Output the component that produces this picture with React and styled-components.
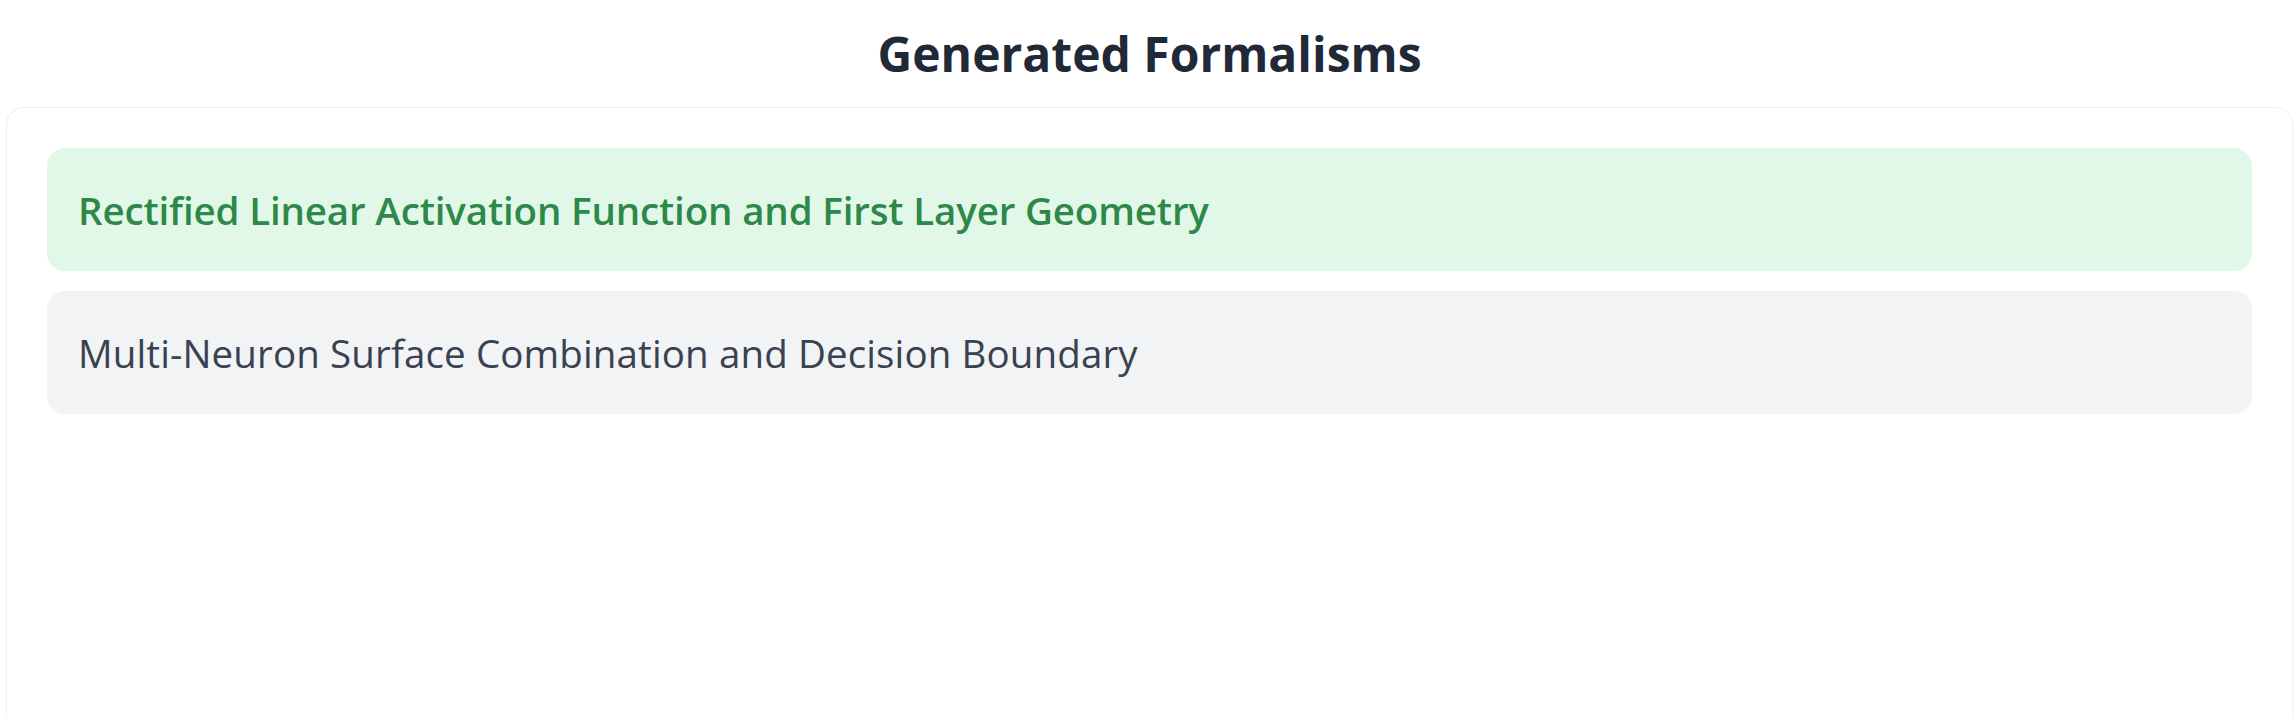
import React from 'react';
import styled, { createGlobalStyle } from 'styled-components';

const GlobalStyle = createGlobalStyle`
  html, body {
    margin: 0;
    padding: 0;
    background: #ffffff;
  }
  body {
    font-family: "Open Sans", "Noto Sans", "Liberation Sans", sans-serif;
  }
`;

// whole page: heading on top, the panel below it runs off the bottom edge
const Page = styled.div`
  width: 100%;
  height: 718px;
  overflow: hidden;
  padding: 0 3px 0 6px;
  box-sizing: border-box;
`;

const Heading = styled.h2`
  margin: 0;
  padding-top: 23px;
  height: 107px;
  box-sizing: border-box;
  text-align: center;
  font-size: 48px;
  line-height: 62px;
  font-weight: 700;
  color: #1f2937;
`;

const Panel = styled.div`
  background: #ffffff;
  border: 1.5px solid #f0f0f1;
  border-radius: 18px;
  box-shadow: 0 1px 3px rgba(0, 0, 0, 0.04);
  padding: 40px 40px 60px 40px;
  height: 700px;
  box-sizing: border-box;
  display: flex;
  flex-direction: column;
  gap: 20px;
`;

const Item = styled.div`
  display: flex;
  align-items: center;
  height: 123px;
  box-sizing: border-box;
  padding: 0 31px;
  border-radius: 18px;
  background: ${(p) => (p.active ? '#e1f8e8' : '#f2f3f5')};
  color: ${(p) => (p.active ? '#2d8849' : '#3a4150')};
  font-size: 38.5px;
  font-weight: ${(p) => (p.active ? 600 : 400)};
  letter-spacing: ${(p) => (p.active ? '-0.15px' : '0.12px')};
  cursor: pointer;
`;

const formalisms = [
  { id: 1, title: 'Rectified Linear Activation Function and First Layer Geometry' },
  { id: 2, title: 'Multi-Neuron Surface Combination and Decision Boundary' },
];

const App = () => {
  const selected = 1;

  return (
    <>
      <GlobalStyle />
      <Page>
        <Heading>Generated Formalisms</Heading>
        <Panel>
          {formalisms.map((f) => (
            <Item key={f.id} active={f.id === selected}>
              {f.title}
            </Item>
          ))}
        </Panel>
      </Page>
    </>
  );
};

export default App;
